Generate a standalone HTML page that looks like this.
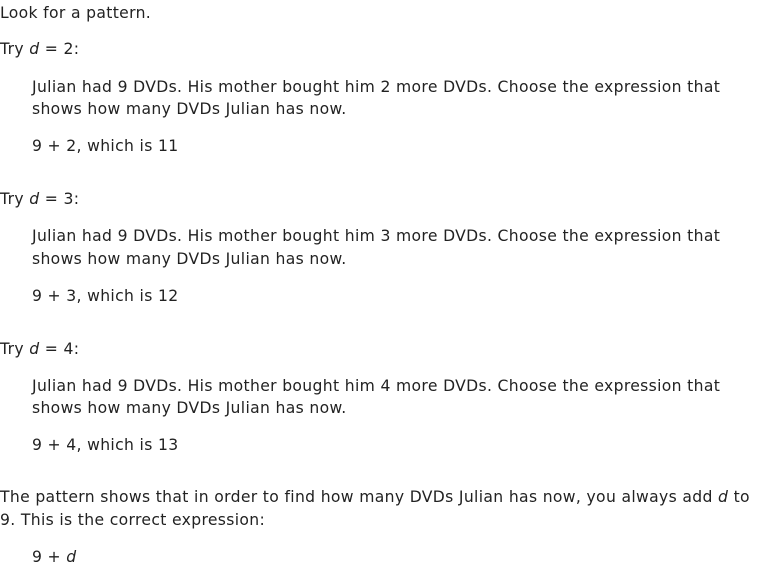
<!DOCTYPE html>
<html><head><meta charset="utf-8"><style>
body{margin:0;background:#fff;width:760px;height:570px;overflow:hidden;font-family:"DejaVu Sans","Liberation Sans",sans-serif;font-size:15.6px;letter-spacing:0.34px;color:#222;}
div{position:absolute;white-space:nowrap;line-height:22px;}
.i{left:32px}
.l{left:0}
</style></head><body>
<div class="l" style="top:2px">Look for a pattern.</div>
<div class="l" style="top:38px">Try <i>d</i> = 2:</div>
<div class="i" style="top:76px">Julian had 9 DVDs. His mother bought him 2 more DVDs. Choose the expression that</div>
<div class="i" style="top:98px">shows how many DVDs Julian has now.</div>
<div class="i" style="top:135px">9 + 2, which is 11</div>
<div class="l" style="top:188px">Try <i>d</i> = 3:</div>
<div class="i" style="top:225px">Julian had 9 DVDs. His mother bought him 3 more DVDs. Choose the expression that</div>
<div class="i" style="top:248px">shows how many DVDs Julian has now.</div>
<div class="i" style="top:285px">9 + 3, which is 12</div>
<div class="l" style="top:338px">Try <i>d</i> = 4:</div>
<div class="i" style="top:375px">Julian had 9 DVDs. His mother bought him 4 more DVDs. Choose the expression that</div>
<div class="i" style="top:397px">shows how many DVDs Julian has now.</div>
<div class="i" style="top:434px">9 + 4, which is 13</div>
<div class="l" style="top:486px">The pattern shows that in order to find how many DVDs Julian has now, you always add <i>d</i> to</div>
<div class="l" style="top:509px">9. This is the correct expression:</div>
<div class="i" style="top:546px">9 + <i>d</i></div>
</body></html>
